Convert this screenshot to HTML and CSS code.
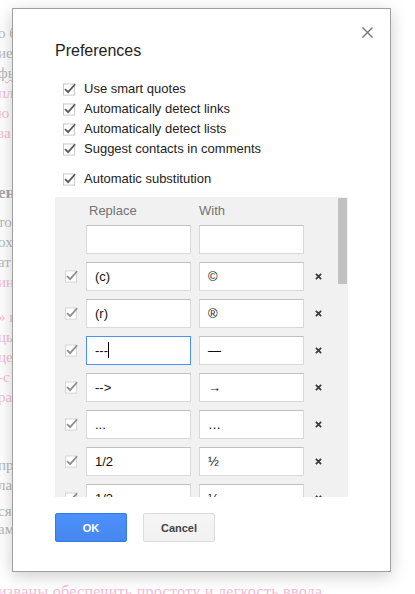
FILE: index.html
```html
<!DOCTYPE html>
<html lang="ru">
<head>
<meta charset="utf-8">
<title>Preferences</title>
<link rel="stylesheet" href="styles.css">
</head>
<body>
<div class="doc">
  <div class="para p1">
    <div class="ln gray">о быс</div>
    <div class="ln gray">ие ка</div>
    <div class="ln gray"><span class="typo">фы</span> и у</div>
    <div class="ln pink">пл и в</div>
    <div class="ln pink">ю зам</div>
    <div class="ln pink">за сч</div>
  </div>
  <div class="ln head">ены а</div>
  <div class="para p2">
    <div class="ln gray">то по</div>
    <div class="ln gray">ох сп</div>
    <div class="ln gray">ат и т</div>
    <div class="ln pink">ин на</div>
  </div>
  <div class="para p3">
    <div class="ln pink">» нап</div>
    <div class="ln pink">ць др</div>
    <div class="ln pink">це и в</div>
    <div class="ln pink">-с до</div>
    <div class="ln pink">ра пр</div>
  </div>
  <div class="para p4">
    <div class="ln gray">пр на</div>
    <div class="ln gray">ла пр</div>
  </div>
  <div class="para p5">
    <div class="ln gray">ся пр</div>
    <div class="ln gray">ам ре</div>
  </div>
  <div class="para p6">
    <div class="ln pink last">изваны обеспечить простоту и легкость ввода</div>
  </div>
</div>

<div class="dialog" role="dialog" aria-labelledby="dlg-title">
  <svg class="close" width="11" height="11" viewBox="0 0 11 11" aria-label="Close"><path d="M0.5 0.5 L10.5 10.5 M10.5 0.5 L0.5 10.5" stroke="#777" stroke-width="1.4" fill="none"/></svg>
  <h1 class="title" id="dlg-title">Preferences</h1>

  <div class="options">
    <label class="opt"><svg class="cb" width="14" height="14" viewBox="0 0 14 14"><rect x="0.5" y="0.5" width="12" height="12" fill="#fff" stroke="#c6c6c6"/><path d="M2.2 6 L5.5 9.3 L13 0.8" fill="none" stroke="#5a5a5a" stroke-width="2"/></svg><span>Use smart quotes</span></label>
    <label class="opt"><svg class="cb" width="14" height="14" viewBox="0 0 14 14"><rect x="0.5" y="0.5" width="12" height="12" fill="#fff" stroke="#c6c6c6"/><path d="M2.2 6 L5.5 9.3 L13 0.8" fill="none" stroke="#5a5a5a" stroke-width="2"/></svg><span>Automatically detect links</span></label>
    <label class="opt"><svg class="cb" width="14" height="14" viewBox="0 0 14 14"><rect x="0.5" y="0.5" width="12" height="12" fill="#fff" stroke="#c6c6c6"/><path d="M2.2 6 L5.5 9.3 L13 0.8" fill="none" stroke="#5a5a5a" stroke-width="2"/></svg><span>Automatically detect lists</span></label>
    <label class="opt"><svg class="cb" width="14" height="14" viewBox="0 0 14 14"><rect x="0.5" y="0.5" width="12" height="12" fill="#fff" stroke="#c6c6c6"/><path d="M2.2 6 L5.5 9.3 L13 0.8" fill="none" stroke="#5a5a5a" stroke-width="2"/></svg><span>Suggest contacts in comments</span></label>
  </div>
  <label class="opt sub"><svg class="cb" width="14" height="14" viewBox="0 0 14 14"><rect x="0.5" y="0.5" width="12" height="12" fill="#fff" stroke="#c6c6c6"/><path d="M2.2 6 L5.5 9.3 L13 0.8" fill="none" stroke="#5a5a5a" stroke-width="2"/></svg><span>Automatic substitution</span></label>

  <div class="subs-wrap">
    <div class="subs">
      <div class="subs-head"><span class="h-rep">Replace</span><span class="h-with">With</span></div>
      <div class="row"><span class="cb-space"></span><div class="field"></div><div class="field"></div></div>
      <div id="rows"></div>
    </div>
    <div class="thumb"></div>
  </div>

  <div class="buttons">
    <button class="btn ok">OK</button>
    <button class="btn cancel">Cancel</button>
  </div>
</div>
<script src="app.js"></script>
</body>
</html>
```

FILE: app.js
```js
var data = [
  ["(c)", "©"], ["(r)", "®"], ["---", "—", true], ["-->", "→"], ["...", "…"],
  ["1/2", "½"], ["1/3", "⅓"], ["1/4", "¼"], ["1/5", "⅕"], ["1/6", "⅙"],
  ["1/8", "⅛"], ["2/3", "⅔"], ["2/5", "⅖"], ["3/4", "¾"], ["3/5", "⅗"],
  ["3/8", "⅜"], ["4/5", "⅘"], ["5/6", "⅚"], ["5/8", "⅝"], ["7/8", "⅞"],
  ["!=", "≠"], ["<=", "≤"], [">=", "≥"], ["<--", "←"], ["(tm)", "™"], ["--", "–"]
];
var cb = '<svg class="cb cb-row" width="14" height="14" viewBox="0 0 14 14"><rect x="0.5" y="0.5" width="12" height="12" fill="#fff" stroke="#d3d3d3"/><path d="M2.2 6 L5.5 9.3 L13 0.8" fill="none" stroke="#8e8e8e" stroke-width="2"/></svg>';
var del = '<svg class="del" width="8" height="8" viewBox="0 0 8 8"><path d="M1 1 L7 7 M7 1 L1 7" stroke="#3a3a3a" stroke-width="2" fill="none"/></svg>';
function esc(s) { return s.replace(/&/g, "&amp;").replace(/</g, "&lt;").replace(/>/g, "&gt;"); }
var html = "";
data.forEach(function (d) {
  var f1 = d[2] ? '<div class="field focus">' + esc(d[0]) + '<span class="caret"></span></div>' : '<div class="field">' + esc(d[0]) + '</div>';
  html += '<div class="row">' + cb + f1 + '<div class="field">' + esc(d[1]) + '</div>' + del + '</div>';
});
document.getElementById("rows").innerHTML = html;
```

FILE: styles.css
```css
html, body {
  margin: 0;
  padding: 0;
  background: #fff;
  overflow: hidden;
}
body {
  width: 415px;
  height: 594px;
  position: relative;
}

/* background document */
.doc {
  margin-left: -2px;
  padding-top: 23px;
  font-family: "Liberation Serif", serif;
  font-size: 15px;
  line-height: 20px;
  white-space: nowrap;
}
.ln { height: 20px; }
.gray { color: #b9b9b9; }
.pink { color: #f5bcd5; }
.head {
  margin-top: 40px;
  color: #a9a9a9;
  font-weight: bold;
  font-size: 17px;
}
.typo {
  text-decoration: underline wavy #f3a7b4;
  text-decoration-thickness: 1px;
}
.p2 { margin-top: 9px; }
.p3 { margin-top: 15px; }
.p4 { margin-top: 48px; }
.p5 { margin-top: 7px; }
.p5 .ln { height: 18px; line-height: 18px; }
.p6 { margin-top: 44px; }
.last { font-size: 16px; letter-spacing: 0.3px; }

/* dialog */
.dialog {
  position: absolute;
  left: 12px;
  top: 8px;
  width: 379px;
  box-sizing: border-box;
  padding: 30px 42px 29px;
  background: #fff;
  border: 1px solid #a0a0a0;
  box-shadow: 0 4px 16px rgba(0, 0, 0, 0.2);
  font-family: "Liberation Sans", Arial, sans-serif;
  font-size: 13px;
  color: #222;
}
.close {
  position: absolute;
  top: 18px;
  right: 17px;
}
.title {
  margin: 0;
  font-size: 16px;
  line-height: 24px;
  font-weight: normal;
  color: #222;
}
.options {
  margin-top: 15px;
  display: flex;
  flex-direction: column;
}
.opt {
  display: flex;
  align-items: center;
  height: 20px;
  gap: 8px;
  padding-left: 8px;
}
.sub { margin-top: 10px; }
.cb {
  overflow: visible;
  flex: none;
  margin-top: 3px;
  width: 13px;
  height: 14px;
}

/* substitutions list */
.subs-wrap {
  position: relative;
  margin-top: 9px;
}
.subs {
  height: 300px;
  overflow: hidden;
  background: #f1f1f1;
  padding: 4px 0 8px;
  box-sizing: border-box;
}
.thumb {
  position: absolute;
  top: 1px;
  right: 1px;
  width: 9px;
  height: 86px;
  background: #c1c1c1;
}
.subs-head {
  display: flex;
  height: 20px;
  line-height: 20px;
  margin-bottom: 4px;
  padding-left: 31px;
  color: #737373;
}
.h-rep { width: 110px; padding-left: 3px; }
.row {
  display: flex;
  align-items: center;
  padding-left: 10px;
  margin-bottom: 8px;
}
.cb-space { width: 13px; flex: none; }
.cb-row { margin-top: 0; }
.row .field { margin-left: 8px; }
.field {
  width: 105px;
  height: 29px;
  box-sizing: border-box;
  flex: none;
  border: 1px solid #d9d9d9;
  border-top-color: #c0c0c0;
  background: #fff;
  padding: 0 8px;
  line-height: 27px;
  color: #111;
  white-space: nowrap;
  overflow: hidden;
}
.field.focus {
  border-color: #4d90fe;
}
.caret {
  display: inline-block;
  width: 1px;
  height: 16px;
  background: #000;
  vertical-align: -3px;
}
.del {
  margin-left: 11px;
  flex: none;
  width: 7px;
  height: 7px;
}

/* buttons */
.buttons {
  margin-top: 16px;
  display: flex;
  gap: 16px;
}
.btn {
  min-width: 72px;
  height: 29px;
  box-sizing: border-box;
  padding: 0 8px;
  border-radius: 2px;
  font-family: "Liberation Sans", Arial, sans-serif;
  font-size: 11px;
  font-weight: bold;
}
.ok {
  color: #fff;
  background: linear-gradient(#4d90fe, #4787ed);
  border: 1px solid #3079ed;
}
.cancel {
  color: #444;
  background: linear-gradient(#f5f5f5, #f1f1f1);
  border: 1px solid #dcdcdc;
}
```
